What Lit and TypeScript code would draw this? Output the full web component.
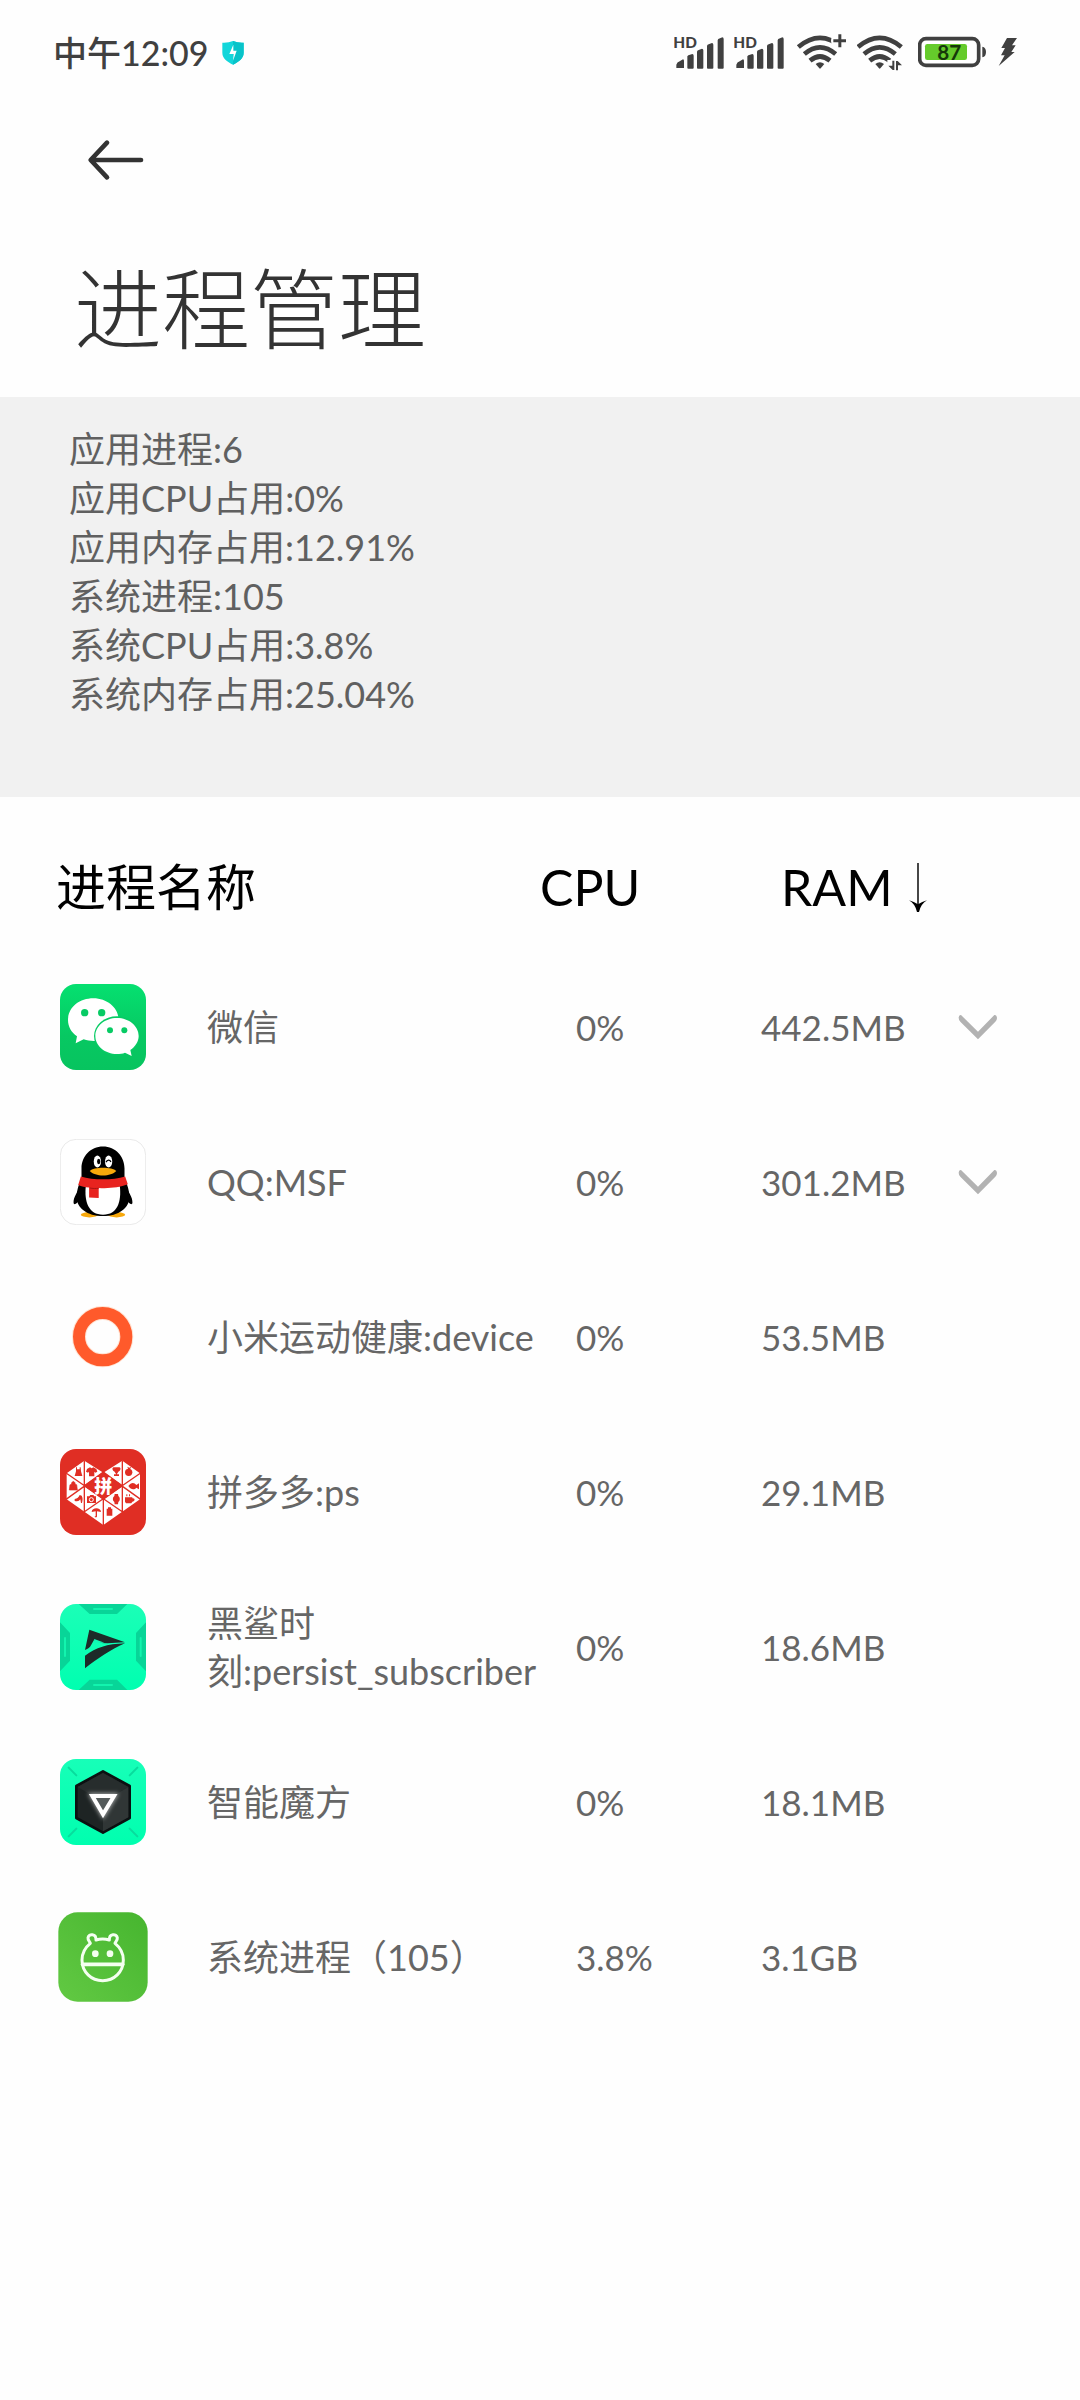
import { LitElement, html, svg, css, nothing, TemplateResult } from "lit";
import { customElement, property, state } from "lit/decorators.js";

interface ProcessRow {
  icon: string;
  name: string;
  cpu: string;
  ram: string;
  expandable?: boolean;
}

const SUMMARY: string[] = [
  "应用进程:6",
  "应用CPU占用:0%",
  "应用内存占用:12.91%",
  "系统进程:105",
  "系统CPU占用:3.8%",
  "系统内存占用:25.04%",
];

const PROCESSES: ProcessRow[] = [
  { icon: "wechat", name: "微信", cpu: "0%", ram: "442.5MB", expandable: true },
  { icon: "qq", name: "QQ:MSF", cpu: "0%", ram: "301.2MB", expandable: true },
  { icon: "health", name: "小米运动健康:device", cpu: "0%", ram: "53.5MB" },
  { icon: "pdd", name: "拼多多:ps", cpu: "0%", ram: "29.1MB" },
  { icon: "shark", name: "黑鲨时刻:persist_subscriber", cpu: "0%", ram: "18.6MB" },
  { icon: "cube", name: "智能魔方", cpu: "0%", ram: "18.1MB" },
  { icon: "system", name: "系统进程（105）", cpu: "3.8%", ram: "3.1GB" },
];

const ICONS: Record<string, TemplateResult> = {
  wechat: html`<svg class="icon" viewBox="60 44 258 258" aria-hidden="true">
    <defs>
      <linearGradient id="wg" x1="0" y1="0" x2="0" y2="1">
        <stop offset="0" stop-color="#05e070" />
        <stop offset=".6" stop-color="#07c862" />
        <stop offset="1" stop-color="#07c45f" />
      </linearGradient>
    </defs>
    <rect x="60" y="44" width="258" height="258" rx="48" fill="url(#wg)" />
    <path d="M160 87c-43 0-76 28-76 65 0 20 10 37 27 49l-4 21 24-12c10 4 19 5 31 5 42 0 74-28 74-63S203 87 160 87z" fill="#fff" />
    <ellipse cx="231" cy="200" rx="69" ry="59" fill="#07cb64" />
    <path d="M231 146c-36 0-65 24-65 54s29 54 65 54c8 0 17-1 24-4l20 10-4-18c15-10 25-25 25-42 0-30-29-54-65-54z" fill="#fff" />
    <g fill="#07cb64">
      <circle cx="134" cy="130" r="11" /><circle cx="185" cy="130" r="11" />
      <circle cx="210" cy="183" r="9" /><circle cx="253" cy="183" r="9" />
    </g>
  </svg>`,
  qq: html`<svg class="icon" viewBox="59 509 260 260" aria-hidden="true">
    <rect x="60" y="510" width="258" height="258" rx="48" fill="#fff" stroke="#dedede" stroke-width="2" />
    <path d="M126 652c-14 14-27 34-26 50 1 9 11 3 17-9zM252 652c14 14 27 34 26 50-1 9-11 3-17-9z" fill="#000" />
    <ellipse cx="148" cy="738" rx="26" ry="8" fill="#f7a80b" />
    <ellipse cx="230" cy="738" rx="26" ry="8" fill="#f7a80b" />
    <path d="M189 532c-38 0-65 30-65 66v28c-8 20-15 40-15 58 0 32 32 58 80 58s80-26 80-58c0-18-7-38-15-58v-28c0-36-27-66-65-66z" fill="#000" />
    <path d="M137 652c-5 46 8 86 52 86s56-40 51-86z" fill="#fff" />
    <path d="M122 622c38 12 96 12 134 0l8 24c-25 10-58 13-88 11v30l-29-1v-30c-12-1-23-4-33-8z" fill="#e8231f" />
    <path d="M149 657c9 2 18 2 27 1" fill="none" stroke="#a91313" stroke-width="3" />
    <ellipse cx="172" cy="577" rx="11" ry="18" fill="#fff" />
    <ellipse cx="206" cy="577" rx="11" ry="18" fill="#fff" />
    <ellipse cx="176" cy="577" rx="5" ry="8" fill="#000" />
    <path d="M198 579c4-8 11-8 15-1" fill="none" stroke="#000" stroke-width="4" />
    <path d="M149 606c12-13 68-13 80 0-16 18-64 18-80 0z" fill="#f7a80b" />
  </svg>`,
  health: html`<svg class="icon" viewBox="60 45 258 258" aria-hidden="true">
    <circle cx="188" cy="173" r="71" fill="none" stroke="#ffe3d3" stroke-width="42" />
    <circle cx="188" cy="173" r="71" fill="none" stroke="#ff5a2b" stroke-width="36" />
  </svg>`,
  pdd: html`<svg class="icon" viewBox="60 510 258 258" aria-hidden="true">
    <rect x="60" y="510" width="258" height="258" rx="48" fill="#e02e24" />
    <path d="M133 545l57 36 57-36 53 38v78l-110 77-110-77v-78z" fill="#fff" />
    <path d="M190 577l60 43-60 43-60-43z" fill="#e02e24" />
    <path d="M133 545v154M247 545v154M190 660v80M78 582l170 117M302 582l-170 117M190 581l-112 80M190 581l112 80" stroke="#e02e24" stroke-width="4" fill="none" />
    <g fill="#e02e24">
      <path d="M108 565h3v6h8v-6h3l1 12 4 14h-23l4-14zM141 570l9-5q5 5 10 0l9 5 3 8-6 3-3-3v14h-16v-14l-3 3-6-3z" />
      <path d="M221 565h17c6 0 4 12-3 13-1 3-4 5-4 8h6v5h-15v-5h6c0-3-3-5-4-8-7-1-9-13-3-13z" />
      <circle cx="266" cy="580" r="11" /><path d="M265 572l-3-9 6 3 6-3-4 8z" />
      <path d="M90 617h20l2 16H88zM94 618c0-14 12-14 12 0" stroke="#e02e24" stroke-width="2" />
      <path d="M265 621c8-12 18-11 24-3l8-5v18l-8-5c-6 7-16 7-24-5z" />
      <path d="M104 660c8-1 12-5 15-12l6 2c4 7 3 12 1 22h-3l-2-11c-4 4-6 8-17 5z" />
      <path d="M141 652h7l3-4h9l3 4h5v20h-27z" />
      <path d="M224 645h10l1 6c6 4 6 14 0 18l-1 7h-10l-1-7c-6-4-6-14 0-18z" />
      <path d="M255 655h22v3c9-2 9 10 0 10l-3 5h-16l-3-5zM259 646h3v6h-3zM267 646h3v6h-3z" />
      <path d="M155 699c0-15 28-15 28 0l-12-2v15c0 5-7 4-7 0h3v-15z" />
      <path d="M204 685h9v4h4v21h-17v-21h4z" />
    </g>
    <circle cx="154" cy="662" r="6" fill="none" stroke="#fff" stroke-width="3" />
    <text class="pdd-text" x="190" y="641" text-anchor="middle">拼</text>
  </svg>`,
  shark: html`<svg class="icon" viewBox="60 45 258 258" aria-hidden="true">
    <defs>
      <clipPath id="sc"><rect x="60" y="45" width="258" height="258" rx="48" /></clipPath>
      <linearGradient id="sg" x1="0" y1="0" x2="0" y2="1">
        <stop offset="0" stop-color="#1bffb7" /><stop offset="1" stop-color="#00ffb0" />
      </linearGradient>
    </defs>
    <g clip-path="url(#sc)">
      <rect x="60" y="45" width="258" height="258" fill="url(#sg)" />
      <path d="M116 45h146l-31 30h-82zM116 303h146l-31-31h-82zM60 100l30 32v83l-30 32zM318 100l-30 32v83l30 32z" fill="#08d598" />
      <path d="M162 60h54M162 288h54M75 147v54M302 147v54" stroke="#13f4ae" stroke-width="6" stroke-linecap="round" />
    </g>
    <path d="M148 122l107 38c-34 3-62 3-93 1l2-12-11 20c-3 7-9 11-18 14z" fill="#1d2b29" />
    <path d="M255 163c-45 20-81 45-120 75v-38c35-24 64-35 120-37z" fill="#1d2b29" />
    <path d="M163 150l30 11-32 2z" fill="#10f8b4" />
  </svg>`,
  cube: html`<svg class="icon" viewBox="60 510 258 258" aria-hidden="true">
    <defs>
      <linearGradient id="cg" x1="0" y1="0" x2="0" y2="1">
        <stop offset="0" stop-color="#17ffb8" /><stop offset="1" stop-color="#00ffaf" />
      </linearGradient>
      <filter id="glow" x="-50%" y="-50%" width="200%" height="200%"><feGaussianBlur stdDeviation="7" /></filter>
    </defs>
    <rect x="60" y="510" width="258" height="258" rx="48" fill="url(#cg)" />
    <path d="M86 536l23 23M292 536l-23 23M86 742l23-23M292 742l-23-23" stroke="#08dc9d" stroke-width="6" stroke-linecap="round" />
    <path d="M189 547l80 44v96l-80 44-80-44v-96z" fill="#1e2424" stroke="#0b1011" stroke-width="8" stroke-linejoin="round" />
    <path d="M113 594l76-42 76 42-76 44z" fill="#272d2d" />
    <path d="M189 638l76-44v91l-76 42z" fill="#303636" />
    <path d="M157 621h65l-33 55z" fill="none" stroke="#fff" stroke-width="16" opacity=".6" filter="url(#glow)" />
    <path d="M157 621h65l-33 55z" fill="#555b5b" stroke="#fff" stroke-width="12" />
  </svg>`,
  system: html`<svg class="icon icon-large" viewBox="54 68 270 270" aria-hidden="true">
    <defs>
      <linearGradient id="yg" x1="1" y1="0" x2="0" y2="1">
        <stop offset="0" stop-color="#46b52f" /><stop offset="1" stop-color="#62c943" />
      </linearGradient>
    </defs>
    <rect x="55" y="69" width="268" height="268" rx="58" fill="url(#yg)" />
    <g fill="none" stroke="#f4fff0" stroke-width="9" stroke-linecap="round" stroke-linejoin="round">
      <path d="M168 152q20-6 40 0c-1-20 22-20 24-7 1 8-5 11-7 17 15 12 25 30 25 50 0 36-28 62-62 62s-62-26-62-62c0-20 10-38 25-50-2-6-8-9-7-17 2-13 25-13 24 7z" />
      <path d="M128 225h120" stroke-width="11" />
    </g>
    <circle cx="166" cy="193" r="10" fill="#f4fff0" /><circle cx="210" cy="193" r="10" fill="#f4fff0" />
  </svg>`,
};

@customElement("status-bar")
class StatusBar extends LitElement {
  static styles = css`
    :host {
      display: flex;
      align-items: center;
      justify-content: space-between;
      height: 105px;
      padding: 0 62px 0 53px;
      color: #404040;
      font: 500 34px/48px Lato, "Noto Sans CJK SC", sans-serif;
    }
    .left { display: flex; align-items: center; gap: 14px; }
    .right { display: flex; align-items: center; gap: 10px; }
    svg { display: block; height: 39px; fill: #404040; }
    .shield { height: 24px; }
    .hd { font: 900 46px/1 Lato, sans-serif; }
    .level { font: 700 62px/1 Lato, sans-serif; fill: #16380a; }
  `;

  private signal() {
    return html`<svg viewBox="72 39 150 117" width="50" aria-hidden="true">
      <text class="hd" x="70" y="84">HD</text>
      <path d="M79 144v-10q2-8 10-10l10-6q3 0 3 5v21zM112 144v-35q2-4 8-5l7-2q4 0 4 5v37q0 2-3 2h-13q-3 0-3-2zM141 144V95q0-4 7-6l8-3q4 0 4 5v53q0 2-3 2h-13q-3 0-3-2zM171 144V78q0-4 7-6l8-3q4 0 4 5v70q0 2-3 2h-13q-3 0-3-2zM203 144V61q0-4 7-6l7-3q4 0 4 5v87q0 2-3 2h-12q-3 0-3-2z" />
    </svg>`;
  }

  private wifiArcs(cx: number) {
    return svg`<g fill="none" stroke="#404040" stroke-width="14">
      <path d="M${cx - 65} 81q65-55 130 0" />
      <path d="M${cx - 47} 102q47-40 94 0" />
      <path d="M${cx - 30} 122q30-25 60 0" />
    </g>
    <path d="M${cx - 13} 132q13-10 26 0l-11 13q-2 2-4 0z" />`;
  }

  render() {
    return html`
      <div class="left">
        <span>中午12:09</span>
        <svg class="shield" viewBox="0 0 66 72" width="22" aria-hidden="true">
          <path d="M33 0q14 6 32 5v30c0 18-16 28-32 36C17 63 1 53 1 35V5q18 1 32-5z" fill="#12d6da" />
          <path d="M33 0q14 6 32 5v30c0 18-16 28-32 36z" fill="#08c3c9" />
          <path d="M34 11v18h10L33 59l2-20H22z" fill="#fff" />
        </svg>
      </div>
      <div class="right">
        ${this.signal()} ${this.signal()}
        <svg viewBox="432 39 159 117" width="53" aria-hidden="true">
          ${this.wifiArcs(510)}
          <circle cx="570" cy="63" r="27" fill="#fefefe" />
          <path d="M565 43h9v15h14v9h-14v15h-9V67h-15v-9h15z" />
        </svg>
        <svg viewBox="621 39 153 117" width="51" aria-hidden="true">
          ${this.wifiArcs(689)}
          <path d="M712 120h50v36h-50z" fill="#fefefe" />
          <path d="M727 122h6v28h-5l-13-13h12zM738 151v-28h5l13 13h-12v15z" />
        </svg>
        <svg viewBox="804 39 210 117" width="70" aria-hidden="true">
          <rect x="809" y="56" width="177" height="80" rx="19" fill="#fff" stroke="#404040" stroke-width="11" />
          <rect x="825" y="72" width="126" height="48" rx="7" fill="#65cb2b" />
          <path d="M997 80q11 2 11 16t-11 16z" />
          <text class="level" x="898" y="121" text-anchor="middle">87</text>
        </svg>
        <svg viewBox="1044 39 60 117" width="20" aria-hidden="true">
          <path d="M1071 54h30l-15 22h11l-13 20h10l-48 42 18-32h-11l12-22h-11z" />
        </svg>
      </div>
    `;
  }
}

@customElement("process-table")
class ProcessTable extends LitElement {
  @property({ attribute: false }) rows: ProcessRow[] = [];
  @state() private opened = "";

  static styles = css`
    :host { display: block; }
    table, thead, tbody { display: block; }
    tr { display: grid; align-items: center; }
    th, td { padding: 0; text-align: left; font-weight: 400; }
    .head {
      grid-template-columns: 1fr 241px 299px;
      padding: 50px 0 22px 56px;
      color: #000;
      font: 400 50px/80px Lato, "Noto Sans CJK SC", sans-serif;
    }
    .row {
      grid-template-columns: 148px 1fr 185px 197px 122px;
      min-height: 155px;
      padding-left: 59px;
      color: #666;
      font: 400 35px/48px Lato, "Noto Sans CJK SC", sans-serif;
    }
    .name { font-size: 36px; }
    .sort {
      display: flex;
      align-items: center;
      gap: 16px;
      padding: 0;
      border: 0;
      background: none;
      color: inherit;
      font: inherit;
      cursor: pointer;
    }
    .arrow { display: block; width: 18px; height: 49px; }
    .icon-cell { display: flex; justify-content: center; width: 88px; }
    .icon { display: block; flex: none; width: 86px; height: 86px; }
    .icon-large { width: 90px; height: 90px; }
    .pdd-text { font: 900 54px/1 "Noto Sans CJK SC", sans-serif; fill: #fff; }
    .more {
      display: block;
      padding: 20px 0;
      border: 0;
      background: none;
      cursor: pointer;
    }
    .chevron { display: block; width: 40px; height: 26px; }
  `;

  private toggle(name: string) {
    this.opened = this.opened === name ? "" : name;
  }

  render() {
    return html`
      <table role="table">
        <thead role="rowgroup">
          <tr class="head" role="row">
            <th role="columnheader" scope="col">进程名称</th>
            <th role="columnheader" scope="col"><button class="sort">CPU</button></th>
            <th role="columnheader" scope="col" aria-sort="descending">
              <button class="sort">
                RAM
                <svg class="arrow" viewBox="444 40 54 147" aria-hidden="true">
                  <path d="M471 40v125" stroke="#222" stroke-width="5" />
                  <path d="M444 152q15 4 27 12 12-8 27-12-18 10-24 35h-6q-6-25-24-35z" />
                </svg>
              </button>
            </th>
          </tr>
        </thead>
        <tbody role="rowgroup">
          ${this.rows.map(
            (row) => html`<tr class="row" role="row">
              <td class="icon-cell" role="cell">${ICONS[row.icon]}</td>
              <td class="name" role="cell">${row.name}</td>
              <td role="cell">${row.cpu}</td>
              <td role="cell">${row.ram}</td>
              <td role="cell">
                ${row.expandable
                  ? html`<button
                      class="more"
                      aria-label="展开"
                      aria-expanded=${this.opened === row.name ? "true" : "false"}
                      @click=${() => this.toggle(row.name)}
                    >
                      <svg class="chevron" viewBox="595 491 120 78" aria-hidden="true">
                        <path d="M597 502q0-9 7-8l51 50 49-50q7-1 8 9 0 6-5 11l-52 53-53-53q-5-5-5-12z" fill="#b2b2b2" />
                      </svg>
                    </button>`
                  : nothing}
              </td>
            </tr>`,
          )}
        </tbody>
      </table>
    `;
  }
}

@customElement("app-root")
class AppRoot extends LitElement {
  static styles = css`
    :host {
      display: block;
      min-height: 100vh;
      background: #fefefe;
    }
    .nav { display: flex; align-items: center; height: 110px; padding: 0 85px; }
    .back { padding: 0; border: 0; background: none; cursor: pointer; }
    .back svg { display: block; width: 62px; height: 46px; }
    .title {
      margin: 0;
      padding: 31px 74px 27px;
      color: #333;
      font: 300 88px/124px Lato, "Noto Sans CJK SC", sans-serif;
    }
    .summary {
      padding: 28px 69px 78px;
      background: #f1f1f1;
      color: #606060;
      font: 400 36px/49px Lato, "Noto Sans CJK SC", sans-serif;
    }
    .summary p { margin: 0; }
  `;

  render() {
    return html`
      <status-bar></status-bar>
      <nav class="nav">
        <button class="back" aria-label="返回">
          <svg viewBox="246 412 186 138" aria-hidden="true">
            <path d="M312 429l-49 52 49 52M265 481h149" fill="none" stroke="#333" stroke-width="14" stroke-linecap="round" stroke-linejoin="round" />
          </svg>
        </button>
      </nav>
      <h1 class="title">进程管理</h1>
      <section class="summary">${SUMMARY.map((line) => html`<p>${line}</p>`)}</section>
      <process-table .rows=${PROCESSES}></process-table>
    `;
  }
}
